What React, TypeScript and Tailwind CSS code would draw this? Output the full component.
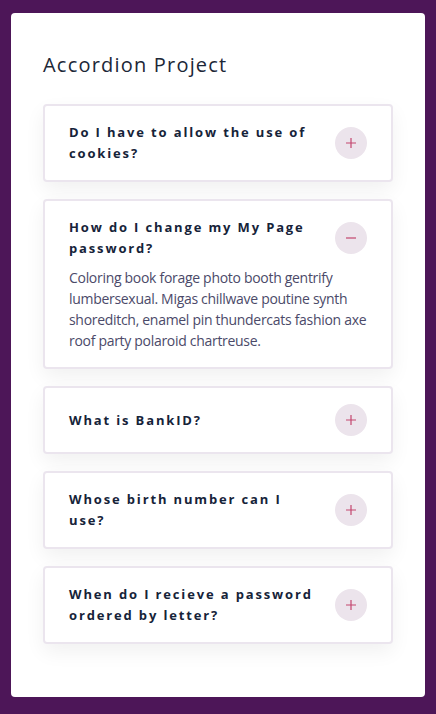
import { useState } from 'react';

const faqs = [
    {
        q: 'Do I have to allow the use of cookies?',
        a: 'Unicorn vinyl poutine brooklyn, next level direct trade iceland. Shaman copper mug church-key coloring book, whatever poutine normcore fixie cred kickstarter post-ironic street art.',
    },
    {
        q: 'How do I change my My Page password?',
        a: 'Coloring book forage photo booth gentrify lumbersexual. Migas chillwave poutine synth shoreditch, enamel pin thundercats fashion axe roof party polaroid chartreuse.',
    },
    {
        q: 'What is BankID?',
        a: 'Enamel pin fam sustainable woke whatever venmo. Authentic asymmetrical put a bird on it, lumbersexual activated charcoal kinfolk banjo cred pickled sartorial.',
    },
    {
        q: 'Whose birth number can I use?',
        a: 'Edison bulb direct trade gentrify beard lo-fi seitan sustainable roof party franzen occupy squid. Knausgaard cronut succulents, scenester readymade shabby chic lyft.',
    },
    {
        q: 'When do I recieve a password ordered by letter?',
        a: 'Trust fund fashion axe bitters skateboard williamsburg, meditation authentic 3 wolf moon. Raw denim selfies 90\'s pug migas.',
    },
];

function Question({ q, a, open, onToggle }: { q: string; a: string; open: boolean; onToggle: () => void }) {
    return (
        <article className="bg-white border-2 border-[#ebe5ee] rounded-[4px] px-[24px] py-[16px] shadow-[0_8px_20px_rgba(0,0,0,0.06)]">
            <header className="flex justify-between items-center">
                <h4 className="w-[252px] text-[13px] leading-[21px] font-bold tracking-[1.85px] text-[#162339]">{q}</h4>
                <button
                    onClick={onToggle}
                    className="w-[32px] h-[32px] shrink-0 rounded-full bg-[#ece4ec] flex items-center justify-center"
                >
                    {open ? (
                        <svg width="10" height="10" viewBox="0 0 10 10">
                            <path d="M0 5h10" stroke="#c3466f" strokeWidth="1.2" />
                        </svg>
                    ) : (
                        <svg width="10" height="10" viewBox="0 0 10 10">
                            <path d="M0 5h10M5 0v10" stroke="#c3466f" strokeWidth="1.2" />
                        </svg>
                    )}
                </button>
            </header>
            {open && <p className="mt-[8px] text-[14px] leading-[21px] tracking-[-0.3px] text-[#4b4a69]">{a}</p>}
        </article>
    );
}

export default function App() {
    const [openIdx, setOpenIdx] = useState<number | null>(1);

    return (
        <main
            className="min-h-screen bg-[#4d1658] pt-[13px] px-[11px] pb-[17px]"
            style={{ fontFamily: '"Open Sans", "Noto Sans", sans-serif' }}
        >
            <div className="bg-white rounded-[4px] h-[684px] px-[32px] pt-[37px]">
                <h3 className="text-[20px] leading-[30px] tracking-[1.2px] text-[#1c2737] mb-[24px]">Accordion Project</h3>
                <section className="flex flex-col gap-[17px]">
                    {faqs.map((item, i) => (
                        <Question
                            key={i}
                            q={item.q}
                            a={item.a}
                            open={openIdx === i}
                            onToggle={() => setOpenIdx(openIdx === i ? null : i)}
                        />
                    ))}
                </section>
            </div>
        </main>
    );
}
